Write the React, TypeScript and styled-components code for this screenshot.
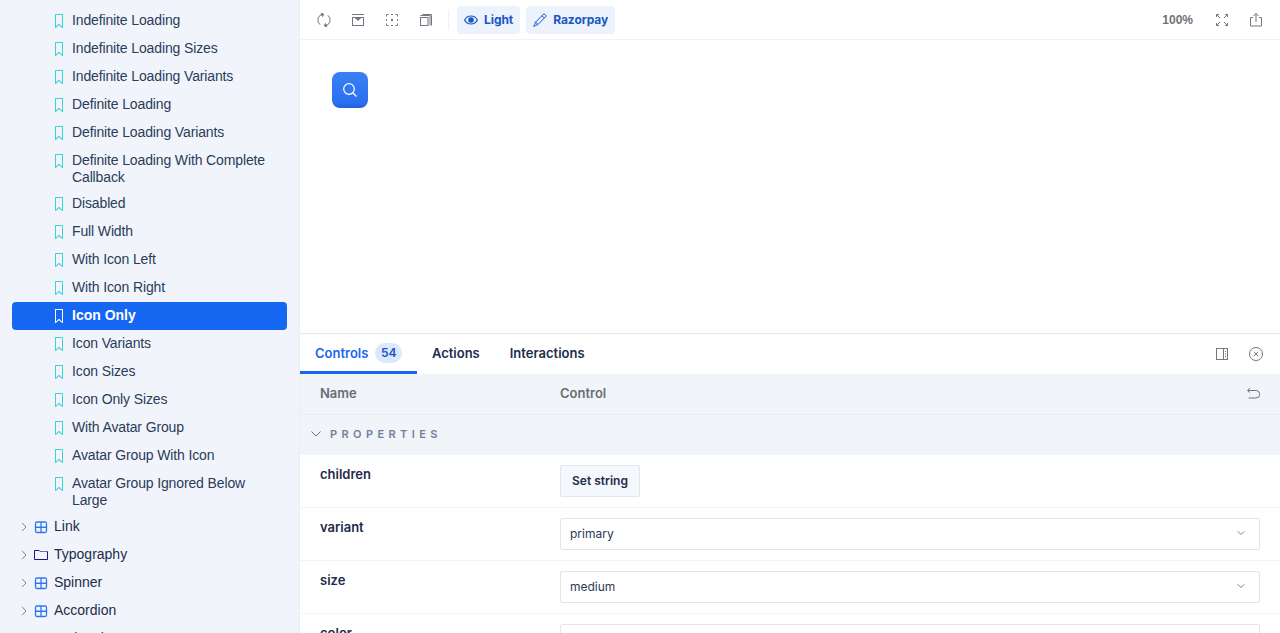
import { ReactNode } from "react";
import styled, { createGlobalStyle } from "styled-components";
import { ChevronDown } from "lucide-react";

const GlobalStyle = createGlobalStyle`
  html, body {
    margin: 0;
    height: 100%;
    overflow: hidden;
    background: #fff;
  }
  #root {
    height: 100%;
  }
  * {
    box-sizing: border-box;
  }
`;

const Page = styled.div`
  display: flex;
  width: 1280px;
  height: 633px;
  overflow: hidden;
  font-family: Inter, "Noto Sans", sans-serif;
  color: #1e2b4a;
`;

const Sidebar = styled.nav`
  flex: 0 0 300px;
  height: 633px;
  overflow: hidden;
  padding: 7px 12px 0 12px;
  background: #f1f5fb;
  border-right: 1px solid #e9edf3;
  font-family: "Liberation Sans", Arial, sans-serif;
`;

const Story = styled.div<{ $active?: boolean }>`
  display: flex;
  align-items: flex-start;
  gap: 8px;
  min-height: 28px;
  padding: 5px 12px 4px 42px;
  border-radius: 4px;
  font-size: 14px;
  line-height: 17px;
  letter-spacing: ${(p) => (p.$active ? "0" : "-0.13px")};
  font-weight: ${(p) => (p.$active ? 700 : 400)};
  color: ${(p) => (p.$active ? "#fff" : "#2b3b5a")};
  background: ${(p) => (p.$active ? "#1566f0" : "transparent")};

  svg {
    flex: 0 0 auto;
    margin: 2px 0 0;
    color: ${(p) => (p.$active ? "#fff" : "#37d5d3")};
  }
`;

const Group = styled.div`
  display: flex;
  align-items: center;
  height: 28px;
  padding-left: 9px;
  font-size: 14px;
  color: #1e2b4a;
`;

const GroupArrow = styled.svg`
  flex: 0 0 auto;
  margin-right: 7px;
  color: #7b8494;
`;

const GroupName = styled.span`
  margin-left: 6px;
  padding-bottom: 2px;
`;

const Main = styled.main`
  flex: 1;
  display: flex;
  flex-direction: column;
  min-width: 0;
`;

const Toolbar = styled.header`
  display: flex;
  align-items: center;
  flex: 0 0 40px;
  padding: 0 17px;
  border-bottom: 1px solid #f1f2f5;
`;

const ToolIcon = styled.span<{ $gap?: number }>`
  display: flex;
  width: 14px;
  height: 14px;
  margin-right: ${(p) => p.$gap ?? 20}px;
  color: #73777f;
`;

const Divider = styled.span`
  width: 1px;
  height: 20px;
  margin: 0 8px 0 1px;
  background: #f1f2f5;
`;

const ThemeButton = styled.button`
  display: flex;
  align-items: center;
  gap: 6px;
  height: 28px;
  margin-right: 6px;
  padding: 0 7px;
  border: 0;
  border-radius: 4px;
  background: #edf3fd;
  color: #1a56c4;
  font: 700 12px Inter, sans-serif;
  letter-spacing: -0.005em;
`;

const Zoom = styled.span`
  margin-left: auto;
  margin-right: 22px;
  font: 700 12px "Liberation Sans", Arial, sans-serif;
  color: #6f7379;
`;

const Canvas = styled.section`
  flex: 1;
  padding: 32px;
`;

const IconOnly = styled.button`
  display: flex;
  align-items: center;
  justify-content: center;
  width: 36px;
  height: 36px;
  padding: 0;
  border: 0;
  border-radius: 8px;
  background: linear-gradient(180deg, #3a80f4 0%, #2a6ff0 85%, #2260d6 100%);
  color: #fff;
`;

const Panel = styled.section`
  flex: 0 0 300px;
  overflow: hidden;
  border-top: 1px solid #e6e8ec;
`;

const TabBar = styled.div`
  display: flex;
  align-items: stretch;
  height: 40px;
  padding-right: 17px;
`;

const Tab = styled.div<{ $active?: boolean }>`
  display: flex;
  align-items: center;
  gap: 7px;
  padding: 0 15px;
  font-size: 13px;
  font-weight: 600;
  color: ${(p) => (p.$active ? "#1566f0" : "#1e2b4a")};
  border-bottom: 3px solid ${(p) => (p.$active ? "#1566f0" : "transparent")};
`;

const Count = styled.span`
  display: flex;
  align-items: center;
  padding: 0 5.5px;
  height: 20px;
  border-radius: 10px;
  background: #dce8fc;
  color: #1a56c4;
  font-size: 12px;
`;

const TabActions = styled.div`
  display: flex;
  align-items: center;
  gap: 20px;
  margin-left: auto;
  color: #73777f;
`;

const TableRow = styled.div`
  display: grid;
  grid-template-columns: 240px 1fr;
  padding: 0 20px;
`;

const TableHead = styled(TableRow)`
  align-items: center;
  height: 41px;
  padding-bottom: 2px;
  background: #f1f4f9;
  border-bottom: 1px solid #e9ecf1;
  font-size: 13px;
  font-weight: 600;
  color: #696d73;
`;

const HeadControl = styled.div`
  display: flex;
  align-items: center;
  justify-content: space-between;
`;

const Section = styled.div`
  display: flex;
  align-items: center;
  gap: 9px;
  height: 40px;
  padding: 0 0 2px 11px;
  background: #f1f4f9;
  font-size: 11px;
  font-weight: 600;
  letter-spacing: 0.4em;
  color: #73809a;

  svg {
    color: #67707f;
  }
`;

const PropRow = styled(TableRow)`
  height: 53px;
  padding-top: 10px;
  border-bottom: 1px solid #f3f4f6;
`;

const PropName = styled.div`
  font-size: 13px;
  font-weight: 600;
  line-height: 19px;
  color: #1e2b4a;
`;

const SetButton = styled.button`
  width: 80px;
  height: 32px;
  padding: 0 0 1px;
  border: 1px solid #e2e6ed;
  border-radius: 2px;
  background: #f4f7fc;
  color: #1e2b4a;
  font: 600 12px Inter, sans-serif;
`;

const Select = styled.div`
  display: flex;
  align-items: center;
  justify-content: space-between;
  height: 32px;
  padding: 0 12px 2px 9px;
  border: 1px solid #e4e5e8;
  border-radius: 2px;
  font-size: 12px;
  color: #2c3a58;

  svg {
    color: #7d828a;
  }
`;

function Bookmark() {
  return (
    <svg width="10" height="14" viewBox="2 0 10 14" fill="currentColor">
      <path d="M3.500 0h7a.5.5 0 01.5.5v13a.5.5 0 01-.82.38L7 11.150l-3.180 2.730A.5.5 0 013 13.500V.5a.5.5 0 01.5-.5zM4 12.410l2.680-2.300a.5.5 0 01.640 0L10 12.410V1H4v11.410z" />
    </svg>
  );
}

function ComponentIcon() {
  return (
    <svg width="14" height="14" viewBox="0 0 14 14" fill="none" stroke="#3176f1" strokeWidth="1.300">
      <rect x="1.500" y="2" width="11" height="10.500" rx="1.500" />
      <path d="M7 2v10.500M1.500 7.250h11" />
    </svg>
  );
}

function FolderIcon() {
  return (
    <svg width="14" height="14" viewBox="0 0 14 14" fill="none">
      <path d="M.5 11.500v-9h4.500l1 1h7.500v8z" stroke="#2a0f85" />
      <path d="M5.500 2.500l1 1h7" stroke="#7e62c4" />
    </svg>
  );
}

const icon = (children: ReactNode) => (
  <svg width="14" height="14" viewBox="0 0 14 14" fill="none" stroke="currentColor">
    {children}
  </svg>
);

const stories: [string, boolean?][] = [
  ["Indefinite Loading"],
  ["Indefinite Loading Sizes"],
  ["Indefinite Loading Variants"],
  ["Definite Loading"],
  ["Definite Loading Variants"],
  ["Definite Loading With Complete Callback"],
  ["Disabled"],
  ["Full Width"],
  ["With Icon Left"],
  ["With Icon Right"],
  ["Icon Only", true],
  ["Icon Variants"],
  ["Icon Sizes"],
  ["Icon Only Sizes"],
  ["With Avatar Group"],
  ["Avatar Group With Icon"],
  ["Avatar Group Ignored Below Large"],
];

export default function App() {
  return (
    <Page>
      <GlobalStyle />
      <Sidebar>
        {stories.map(([name, active]) => (
          <Story key={name} $active={active}>
            <Bookmark />
            <span>{name}</span>
          </Story>
        ))}
        {["Link", "Typography", "Spinner", "Accordion", "ActionList"].map((name) => (
          <Group key={name}>
            <GroupArrow width="6" height="10" viewBox="0 0 6 10" fill="none" stroke="currentColor">
              <path d="M1 .8L5 5 1 9.200" />
            </GroupArrow>
            {name === "Typography" ? <FolderIcon /> : <ComponentIcon />}
            <GroupName>{name}</GroupName>
          </Group>
        ))}
      </Sidebar>
      <Main>
        <Toolbar>
          <ToolIcon>
            {icon(
              <>
                <path d="M3.200 11.800A6 6 0 015.500 1.200M10.800 2.200A6 6 0 018.500 12.800" />
                <path d="M4 .6l2.600.4-1 2.400zM10 13.400L7.400 13l1-2.400z" fill="currentColor" />
              </>
            )}
          </ToolIcon>
          <ToolIcon>
            {icon(
              <>
                <path d="M1 1.500h12" />
                <rect x="1.500" y="4.500" width="11" height="8" />
                <path d="M4.500 5l2.500 2.500L9.500 5z" fill="currentColor" />
              </>
            )}
          </ToolIcon>
          <ToolIcon>
            {icon(
              <>
                <path d="M1.500 3.500v-2h2M10.500 1.500h2v2M12.500 10.500v2h-2M3.500 12.500h-2v-2M6 1.500h2M6 12.500h2M1.500 6v2M12.500 6v2" />
                <rect x="6" y="6" width="2" height="2" fill="currentColor" stroke="none" />
              </>
            )}
          </ToolIcon>
          <ToolIcon $gap={14}>
            {icon(
              <>
                <rect x="1.500" y="4.500" width="7.500" height="8" />
                <path d="M1.500 2.500h9.500v10M3.500 1.500h9v11" />
              </>
            )}
          </ToolIcon>
          <Divider />
          <ThemeButton>
            <svg width="14" height="14" viewBox="0 0 14 14" fill="none" stroke="currentColor" strokeWidth="1.200">
              <path d="M.6 7C2 4.300 4.300 3 7 3s5 1.300 6.400 4c-1.400 2.700-3.700 4-6.400 4S2 9.700.6 7z" />
              <circle cx="7" cy="7" r="2.200" fill="currentColor" />
            </svg>
            Light
          </ThemeButton>
          <ThemeButton>
            <svg width="14" height="14" viewBox="0 0 14 14" fill="none" stroke="currentColor">
              <path d="M11 .7l2.300 2.300-8.300 8.500-2.500 1-1.800.9.900-1.800 1-2.500zM2.600 9l2.400 2.400M9 2.800l2.200 2.200" />
            </svg>
            Razorpay
          </ThemeButton>
          <Zoom>100%</Zoom>
          <ToolIcon>
            {icon(
              <path d="M1.500 4V1.500H4M1.500 1.500l3.500 3.500M12.500 4V1.500H10M12.500 1.500L9 5M1.500 10v2.500H4M1.500 12.500L5 9M12.500 10v2.500H10M12.500 12.500L9 9" />
            )}
          </ToolIcon>
          <ToolIcon $gap={0}>
            {icon(<path d="M4 4.500H1.500v8.500h11V4.500H10M7 9V.500M4.500 3L7 .500 9.500 3" />)}
          </ToolIcon>
        </Toolbar>
        <Canvas>
          <IconOnly>
            <svg width="14" height="14" viewBox="0 0 14 14" fill="none" stroke="currentColor" strokeWidth="1.200">
              <circle cx="6" cy="6" r="5.300" />
              <path d="M10 10l3.500 3.500" />
            </svg>
          </IconOnly>
        </Canvas>
        <Panel>
          <TabBar>
            <Tab $active>
              Controls <Count>54</Count>
            </Tab>
            <Tab>Actions</Tab>
            <Tab>Interactions</Tab>
            <TabActions>
              <ToolIcon $gap={0}>
                {icon(
                  <>
                    <rect x="1.500" y="1.500" width="11" height="11" />
                    <path d="M8.500 1.500v11M10.500 4v1M10.500 6.500v1M10.500 9v1" />
                  </>
                )}
              </ToolIcon>
              <ToolIcon $gap={0}>
                {icon(
                  <>
                    <circle cx="7" cy="7" r="6.500" />
                    <path d="M4.800 4.800l4.400 4.400M9.200 4.800L4.800 9.200" />
                  </>
                )}
              </ToolIcon>
            </TabActions>
          </TabBar>
          <TableHead>
            <div>Name</div>
            <HeadControl>
              Control
              <ToolIcon $gap={0}>
                {icon(<path d="M4 2L1.500 4.500 4 6.500M1.500 4.500h8.500a2.500 2.500 0 010 7.500H2.500" />)}
              </ToolIcon>
            </HeadControl>
          </TableHead>
          <Section>
            <svg width="10" height="6" viewBox="0 0 10 6" fill="none" stroke="currentColor">
              <path d="M.5.5L5 5 9.500.5" />
            </svg>
            PROPERTIES
          </Section>
          <PropRow>
            <PropName>children</PropName>
            <div>
              <SetButton>Set string</SetButton>
            </div>
          </PropRow>
          <PropRow>
            <PropName>variant</PropName>
            <Select>
              primary
              <ChevronDown size={12} />
            </Select>
          </PropRow>
          <PropRow>
            <PropName>size</PropName>
            <Select>
              medium
              <ChevronDown size={12} />
            </Select>
          </PropRow>
          <PropRow>
            <PropName>color</PropName>
            <Select />
          </PropRow>
        </Panel>
      </Main>
    </Page>
  );
}
